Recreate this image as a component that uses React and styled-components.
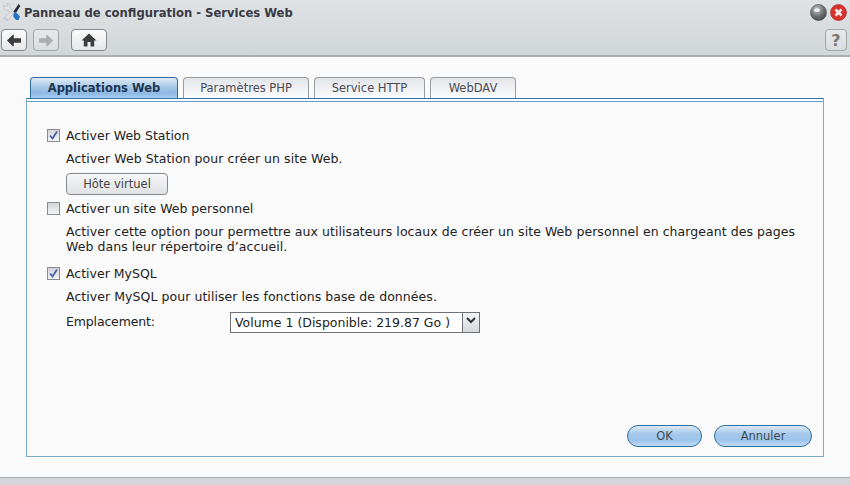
import React from 'react';
import styled, { createGlobalStyle } from 'styled-components';

const Global = createGlobalStyle`
  html, body { margin: 0; padding: 0; height: 100%; overflow: hidden; }
  body { font-family: "DejaVu Sans", Verdana, sans-serif; font-size: 12.5px; color: #222; background: #fafafa; }
  #root { height: 100%; }
`;

const Page = styled.div`
  width: 850px; height: 485px; display: flex; flex-direction: column; background: #fafafa;
`;
const Header = styled.header`
  height: 57px; flex: none; box-sizing: border-box; border-bottom: 2px solid #acafb1;
  background: linear-gradient(#dfe2e5, #d1d6d9);
  display: flex; flex-direction: column;
`;
const TitleBar = styled.div`
  height: 26px; display: flex; align-items: center; padding: 0 3px 0 3px;
`;
const Title = styled.h1`
  margin: 0 0 0 3px; font-size: 11.6px; font-weight: bold; color: #3a3a44; flex: 1; white-space: nowrap;
`;
const Toolbar = styled.div`
  display: flex; align-items: center; padding: 3px 3px 0 1px; gap: 6px;
`;
const ToolBtn = styled.div`
  width: ${p => p.$w}px; height: 22px; box-sizing: border-box; border-radius: 4px;
  border: 1px solid ${p => (p.$dim ? '#a3a6a9' : '#85888b')};
  background: ${p => (p.$dim ? 'linear-gradient(#e6e8ea, #dadde0)' : 'linear-gradient(#fafbfb, #e4e6e8)')};
  display: flex; align-items: center; justify-content: center;
  margin-left: ${p => p.$ml || 0}px;
`;
const HelpBtn = styled(ToolBtn)`
  font-weight: bold; font-size: 16px; color: #777;
`;
const Spacer = styled.div` flex: 1; `;
const Round = styled.div`
  width: 17px; height: 17px; margin-left: 3px; flex: none; margin-top: -2px;
`;
const Body = styled.main`
  flex: 1; padding: 20px 26px 20px 26px; display: flex; flex-direction: column;
`;
const Tabs = styled.nav`
  display: flex; gap: 5px; padding-left: 4px; height: 21px; position: relative; z-index: 1;
`;
const Tab = styled.div`
  width: ${p => p.$w}px; height: 21px; box-sizing: border-box; text-align: center; line-height: 20px;
  border-radius: 4px 4px 0 0; font-size: 11.5px;
  border: 1px solid ${p => (p.$active ? '#2f6f9f' : '#9a9c9f')};
  border-bottom: 0;
  font-weight: ${p => (p.$active ? 'bold' : 'normal')};
  color: ${p => (p.$active ? '#1a3550' : '#4a4a55')};
  background: ${p => p.$active
    ? 'linear-gradient(#dfeaf4, #a8c8e8 45%, #8db8e2 75%, #a6cdf0)'
    : 'linear-gradient(#e2e5e9, #fbfcfd)'};
`;
const Panel = styled.section`
  flex: 1; box-sizing: border-box; border: 1px solid #7ba9ca; border-top: 1px solid #2f75a8;
  padding: 0 11px 0 20px; display: flex; flex-direction: column;
  &::before { content: ''; display: block; height: 1px; flex: none; margin: 2px -11px 0 -20px; background: #5f9cc8; }
`;
const Option = styled.label`
  display: flex; align-items: center; height: 16px; gap: 6px; color: #222;
  margin-top: ${p => p.$mt}px;
`;
const Check = styled.span`
  width: 13px; height: 13px; box-sizing: border-box; border: 1px solid #8a8d90; background: linear-gradient(#d2d4d8, #f4f4f5);
  display: inline-block; flex: none;
`;
const Desc = styled.p`
  margin: ${p => p.$mt}px 0 0 19px; line-height: 15px; color: #222; max-width: 735px; letter-spacing: .06px;
`;
const VirtBtn = styled.div`
  margin: 7px 0 0 19px; width: 102px; height: 22px; box-sizing: border-box; text-align: center; line-height: 20px;
  border: 1px solid #85888c; border-radius: 4px; background: linear-gradient(#f6f7f8, #dfe1e4); color: #444;
  font-size: 11.5px;
`;
const FieldRow = styled.div`
  display: flex; align-items: center; margin: 8px 0 0 19px; height: 21px;
`;
const FieldLabel = styled.span` width: 164px; letter-spacing: -.15px; padding-bottom: 2px; `;
const Select = styled.div`
  width: 250px; height: 21px; box-sizing: border-box; border: 1px solid #6d7074; display: flex; background: #fff;
`;
const SelectText = styled.span` flex: 1; line-height: 20px; padding-left: 4px; color: #222; white-space: nowrap; `;
const SelectArrow = styled.span`
  width: 17px; border-left: 1px solid #6d7074; background: linear-gradient(#f4f5f6, #d5d8db);
  display: flex; justify-content: center; padding-top: 4px; box-sizing: border-box;
`;
const Actions = styled.div`
  margin-top: auto; display: flex; justify-content: flex-end; gap: 12px; padding-bottom: 9px;
`;
const Pill = styled.div`
  width: ${p => p.$w}px; height: 22px; box-sizing: border-box; text-align: center; line-height: 20px;
  border: 1px solid #2f6f9f; border-radius: 11px; color: #3f4a55; font-size: 11.5px;
  background: linear-gradient(#dce9f5, #a5c8ea 40%, #9cc4ec 70%, #c2dbf3);
`;
const Footer = styled.footer`
  height: 8px; flex: none; box-sizing: border-box; background: #d3d7da; border-top: 1px solid #aaa;
`;

const CheckMark = () => (
  <svg width="11" height="11" viewBox="0 0 11 11" style={{ display: 'block' }}>
    <path d="M2 5.5 L4.5 8.5 L9 1.5" fill="none" stroke="#4a5fae" strokeWidth="1.8" />
  </svg>
);

const Arrow = ({ dir, color }) => (
  <svg width="16" height="13" viewBox="0 0 16 13">
    <path d={dir === 'left' ? 'M7 0.5 L1 6.5 L7 12.5 L7.8 11.7 L7.8 8.7 L15 8.7 L15 4.3 L7.8 4.3 L7.8 1.3 Z' : 'M9 0.5 L15 6.5 L9 12.5 L8.2 11.7 L8.2 8.7 L1 8.7 L1 4.3 L8.2 4.3 L8.2 1.3 Z'} fill={color} />
  </svg>
);

const Home = () => (
  <svg width="16" height="14" viewBox="0 0 16 14">
    <path d="M8 0.5 L0.5 7.5 L2.8 7.5 L2.8 13.5 L6.5 13.5 L6.5 9 L9.5 9 L9.5 13.5 L13.2 13.5 L13.2 7.5 L15.5 7.5 Z" fill="#3c3c3c" />
  </svg>
);

const Logo = () => (
  <svg width="18" height="18" viewBox="0 0 18 18" style={{ flex: 'none', marginTop: -2 }}>
    <path d="M1 2 L3 4 L5 2.5 L3.5 0.5 C6 0 8 2 7.2 4.8 L11 9 L9 11 L5 7 C2 8 0 5 1 2 Z" fill="#e2e5e8" stroke="#adb2b7" strokeWidth=".6" />
    <path d="M8.5 8 L4 12.5 C2 12.8 1 14.5 1.5 16.2 L3.2 14.8 L4.6 16 L3.4 17.6 C5.5 18 7 16.2 6.8 14.2 L10.5 10.5 Z" fill="#e2e5e8" stroke="#adb2b7" strokeWidth=".6" />
    <path d="M10.5 8.5 L12.5 10.5 L17.3 3 L15.6 1 Z" fill="#1f2a33" />
    <path d="M12.5 8.8 L17 13.5 L15.5 17 L13 17 L10.2 13.2 L10.8 10.5 Z" fill="#1f72c0" />
  </svg>
);

const Minimize = () => (
  <svg width="17" height="17" viewBox="0 0 17 17">
    <defs>
      <radialGradient id="gm" cx="40%" cy="30%" r="75%">
        <stop offset="0" stopColor="#bfc3c6" /><stop offset="0.6" stopColor="#6b6f72" /><stop offset="1" stopColor="#44474a" />
      </radialGradient>
    </defs>
    <circle cx="8.5" cy="8.5" r="8" fill="url(#gm)" stroke="#444" strokeWidth=".6" />
    <ellipse cx="7" cy="6.2" rx="2.8" ry="1.9" fill="#f0f1f2" />
  </svg>
);

const Close = () => (
  <svg width="17" height="17" viewBox="0 0 17 17">
    <circle cx="8.5" cy="8.5" r="8" fill="#d8312f" stroke="#a22" strokeWidth=".6" />
    <path d="M5.5 5.5 L11.5 11.5 M11.5 5.5 L5.5 11.5" stroke="#f8eaea" strokeWidth="2.6" />
  </svg>
);

export default function App() {
  return (
    <Page>
      <Global />
      <Header>
        <TitleBar>
          <Logo />
          <Title>Panneau de configuration - Services Web</Title>
          <Round><Minimize /></Round>
          <Round><Close /></Round>
        </TitleBar>
        <Toolbar>
          <ToolBtn $w={26}><Arrow dir="left" color="#3c3c3c" /></ToolBtn>
          <ToolBtn $w={26} $dim><Arrow dir="right" color="#a9adb0" /></ToolBtn>
          <ToolBtn $w={36} $ml={6}><Home /></ToolBtn>
          <Spacer />
          <HelpBtn $w={22} $dim>?</HelpBtn>
        </Toolbar>
      </Header>
      <Body>
        <Tabs>
          <Tab $active $w={148}>Applications Web</Tab>
          <Tab $w={126}>Paramètres PHP</Tab>
          <Tab $w={111}>Service HTTP</Tab>
          <Tab $w={86}>WebDAV</Tab>
        </Tabs>
        <Panel>
          <Option $mt={25}><Check><CheckMark /></Check>Activer Web Station</Option>
          <Desc $mt={8}>Activer Web Station pour créer un site Web.</Desc>
          <VirtBtn>Hôte virtuel</VirtBtn>
          <Option $mt={5}><Check />Activer un site Web personnel</Option>
          <Desc $mt={8}>Activer cette option pour permettre aux utilisateurs locaux de créer un site Web personnel en chargeant des pages Web dans leur répertoire d’accueil.</Desc>
          <Option $mt={11}><Check><CheckMark /></Check>Activer MySQL</Option>
          <Desc $mt={8}>Activer MySQL pour utiliser les fonctions base de données.</Desc>
          <FieldRow>
            <FieldLabel>Emplacement:</FieldLabel>
            <Select>
              <SelectText>Volume 1 (Disponible: 219.87 Go )</SelectText>
              <SelectArrow>
                <svg width="10" height="7" viewBox="0 0 10 7"><path d="M1 1 L5 5 L9 1" fill="none" stroke="#333" strokeWidth="2" /></svg>
              </SelectArrow>
            </Select>
          </FieldRow>
          <Actions>
            <Pill $w={75}>OK</Pill>
            <Pill $w={98}>Annuler</Pill>
          </Actions>
        </Panel>
      </Body>
      <Footer />
    </Page>
  );
}
